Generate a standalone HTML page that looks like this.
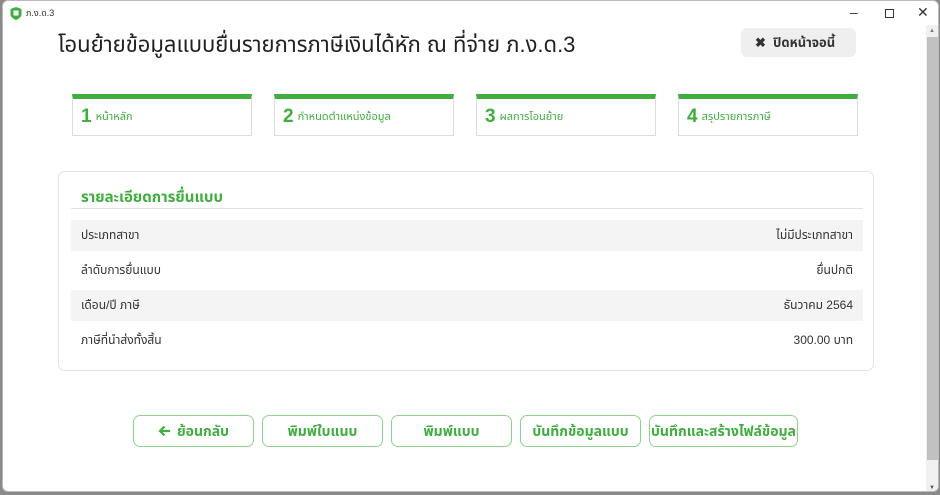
<!DOCTYPE html>
<html><head><meta charset="utf-8"><style>
*{box-sizing:border-box;margin:0;padding:0}
body{width:940px;height:495px;background:#8a8a8a;font-family:"Liberation Sans","Noto Sans Thai","Tahoma",sans-serif;position:relative;overflow:hidden}
.win{position:absolute;left:2px;top:0;width:937px;height:492px;background:#fff;border:1px solid #bbb;border-radius:6px;overflow:hidden}
.abs{position:absolute}
.title{left:55px;top:28px;font-size:22px;color:#222;white-space:nowrap}
.close{left:738px;top:27px;width:115px;height:29px;background:#efefef;border-radius:6px;font-size:13px;color:#333;line-height:29px;padding-left:14px;font-weight:bold}
.step{width:180px;height:42px;border:1px solid #ddd;border-top:5px solid #3fae3f;background:#fff;color:#3fae3f;font-size:11px;line-height:36px;padding-left:8px}
.step b{font-size:19px;vertical-align:middle;margin-right:4px}
.panel{left:55px;top:170px;width:816px;height:200px;border:1px solid #e3e3e3;border-radius:7px}
.ph{left:22px;top:14px;font-size:15px;font-weight:bold;color:#3fae3f}
.hl{left:12px;top:36px;width:792px;height:1px;background:#e0e0e0}
.row{left:12px;width:792px;font-size:12px;color:#333;padding:0 10px;display:flex;justify-content:space-between;align-items:center}
.btn{top:414px;height:32px;border:1px solid #8fd38f;border-radius:7px;color:#3fae3f;font-size:14px;font-weight:bold;text-align:center;line-height:30px}
</style></head><body>
<div class="win">
 <svg class="abs" style="left:7px;top:6px" width="12" height="13" viewBox="0 0 12 13"><path d="M6 0L11.5 2V7C11.5 10 8.5 12 6 13 3.5 12 .5 10 .5 7V2Z" fill="#3fae3f"/><rect x="3.5" y="3.5" width="5" height="5" fill="#fff"/></svg>
 <div class="abs" style="left:23px;top:6px;font-size:9px;color:#333">ภ.ง.ด.3</div>
 <div class="abs" style="left:847px;top:3px;font-size:14px;color:#333">–</div>
 <div class="abs" style="left:882px;top:8px;width:9px;height:9px;border:1px solid #333"></div>
 <div class="abs" style="left:914px;top:3px;font-size:14px;color:#333">✕</div>
 <div class="abs title">โอนย้ายข้อมูลแบบยื่นรายการภาษีเงินได้หัก ณ ที่จ่าย ภ.ง.ด.3</div>
 <div class="abs close">✖&nbsp; ปิดหน้าจอนี้</div>
 <div class="abs step" style="left:69px;top:93px"><b>1</b>หน้าหลัก</div>
 <div class="abs step" style="left:271px;top:93px"><b>2</b>กำหนดตำแหน่งข้อมูล</div>
 <div class="abs step" style="left:473px;top:93px"><b>3</b>ผลการโอนย้าย</div>
 <div class="abs step" style="left:675px;top:93px"><b>4</b>สรุปรายการภาษี</div>
 <div class="abs panel">
  <div class="abs ph">รายละเอียดการยื่นแบบ</div>
  <div class="abs hl"></div>
  <div class="abs row" style="top:48px;height:31px;background:#f4f4f4"><span>ประเภทสาขา</span><span>ไม่มีประเภทสาขา</span></div>
  <div class="abs row" style="top:79px;height:39px"><span>ลำดับการยื่นแบบ</span><span>ยื่นปกติ</span></div>
  <div class="abs row" style="top:118px;height:31px;background:#f4f4f4"><span>เดือน/ปี ภาษี</span><span>ธันวาคม 2564</span></div>
  <div class="abs row" style="top:149px;height:40px"><span>ภาษีที่นำส่งทั้งสิ้น</span><span>300.00 บาท</span></div>
 </div>
 <div class="abs btn" style="left:130px;width:121px"><svg width="13" height="12" viewBox="0 0 13 12" style="vertical-align:-1px;margin-right:6px"><path d="M12 6H2M6.5 1.5L2 6l4.5 4.5" stroke="#3fae3f" stroke-width="2.2" fill="none"/></svg>ย้อนกลับ</div>
 <div class="abs btn" style="left:259px;width:121px">พิมพ์ใบแนบ</div>
 <div class="abs btn" style="left:388px;width:121px">พิมพ์แบบ</div>
 <div class="abs btn" style="left:517px;width:121px">บันทึกข้อมูลแบบ</div>
 <div class="abs btn" style="left:646px;width:149px">บันทึกและสร้างไฟล์ข้อมูล</div>
 <div class="abs" style="left:923px;top:24px;width:13px;height:468px;background:#f0f0f0"></div>
 <div class="abs" style="left:924px;top:36px;width:11px;height:423px;background:#c1c1c1"></div>
 <div class="abs" style="left:926px;top:27px;font-size:6px;color:#777">▲</div>
 <div class="abs" style="left:926px;top:484px;font-size:6px;color:#555">▼</div>
</div>
</body></html>
